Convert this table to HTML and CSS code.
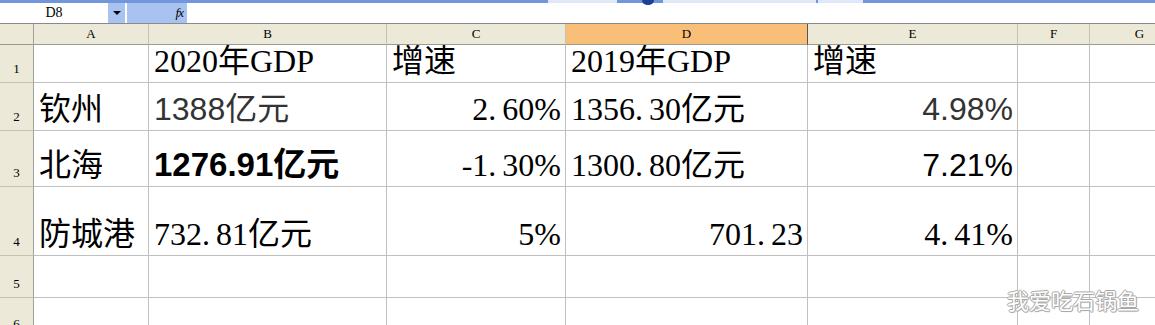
FILE: index.html
```html
<!DOCTYPE html>
<html lang="zh">
<head>
<meta charset="utf-8">
<title>Sheet</title>
<link rel="stylesheet" href="styles.css">
</head>
<body>
<div class="strip">
  <div class="seg seg1"></div>
  <div class="seg knob"></div>
  <div class="seg seg2"></div>
  <div class="seg seg3"></div>
</div>
<div class="fbar">
  <div class="namebox">D8</div>
  <div class="dd"><span class="tri"></span></div>
  <div class="fxbox"><span class="fx">fx</span></div>
  <div class="finput"></div>
</div>
<div class="sheet">
  <div class="h corner"></div>
  <div class="h col">A</div>
  <div class="h col">B</div>
  <div class="h col">C</div>
  <div class="h col sel">D</div>
  <div class="h col">E</div>
  <div class="h col">F</div>
  <div class="h col">G</div>

  <div class="h row">1</div>
  <div class="c"></div>
  <div class="c">2020年GDP</div>
  <div class="c">增速</div>
  <div class="c">2019年GDP</div>
  <div class="c">增速</div>
  <div class="c"></div>
  <div class="c"></div>

  <div class="h row">2</div>
  <div class="c">钦州</div>
  <div class="c sans grey">1388亿元</div>
  <div class="c r">2.<span class="dot"></span>60%</div>
  <div class="c">1356.<span class="dot"></span>30亿元</div>
  <div class="c r sans grey">4.98%</div>
  <div class="c"></div>
  <div class="c"></div>

  <div class="h row">3</div>
  <div class="c">北海</div>
  <div class="c sans bold">1276.91亿元</div>
  <div class="c r">-1.<span class="dot"></span>30%</div>
  <div class="c">1300.<span class="dot"></span>80亿元</div>
  <div class="c r sans">7.21%</div>
  <div class="c"></div>
  <div class="c"></div>

  <div class="h row">4</div>
  <div class="c">防城港</div>
  <div class="c">732.<span class="dot"></span>81亿元</div>
  <div class="c r">5%</div>
  <div class="c r">701.<span class="dot"></span>23</div>
  <div class="c r">4.<span class="dot"></span>41%</div>
  <div class="c"></div>
  <div class="c"></div>

  <div class="h row">5</div>
  <div class="c"></div>
  <div class="c"></div>
  <div class="c"></div>
  <div class="c"></div>
  <div class="c"></div>
  <div class="c"></div>
  <div class="c"></div>

  <div class="h row">6</div>
  <div class="c"></div>
  <div class="c"></div>
  <div class="c"></div>
  <div class="c"></div>
  <div class="c"></div>
  <div class="c"></div>
  <div class="c"></div>
</div>
<div class="watermark">我爱吃石锅鱼</div>
</body>
</html>
```

FILE: styles.css
```css
html, body {
  margin: 0;
  padding: 0;
}
body {
  width: 1155px;
  height: 325px;
  overflow: hidden;
  position: relative;
  background: #ffffff;
  font-family: "Liberation Serif", "Noto Sans CJK SC", serif;
  color: #000;
}

/* top blue strip */
.strip {
  height: 3px;
  background: #7196dc;
  display: flex;
}
.seg { height: 3px; }
.seg1 { margin-left: 548px; width: 69px; background: #dfe8f8; }
.knob { margin-left: 25px; width: 12px; height: 5px; background: #1d3f94; border-radius: 0 0 5px 5px; position: relative; z-index: 2; }
.seg2 { margin-left: 9px; width: 153px; background: #dfe8f8; }
.seg3 { margin-left: 2px; width: 45px; background: #dfe8f8; }

/* formula bar */
.fbar {
  height: 20px;
  display: flex;
  background: #ffffff;
}
.namebox {
  width: 108px;
  text-align: center;
  font-size: 14px;
  line-height: 20px;
  font-family: "Liberation Serif", serif;
  box-sizing: border-box;
}
.dd {
  width: 17px;
  background: #a8c2f1;
  display: flex;
  align-items: center;
  justify-content: center;
}
.tri {
  width: 0;
  height: 0;
  border-left: 4px solid transparent;
  border-right: 4px solid transparent;
  border-top: 4px solid #000;
}
.fxbox {
  margin-left: 2px;
  width: 60px;
  background: #a8c2f1;
  display: flex;
  align-items: center;
  justify-content: flex-end;
  padding-right: 4px;
  box-sizing: border-box;
}
.fx {
  font-family: "Liberation Serif", serif;
  font-style: italic;
  font-size: 13px;
  letter-spacing: -1px;
  color: #000;
}
.finput { flex: 1; }

/* sheet grid */
.sheet {
  display: grid;
  grid-template-columns: 34px 115px 238px 179px 242px 210px 72px 100px;
  grid-template-rows: 21px 38px 48px 56px 69px 42px 40px;
  border-top: 1px solid #8a8a8a;
}
.sheet > div {
  box-sizing: border-box;
  border-right: 1px solid #c0c0c0;
  border-bottom: 1px solid #c0c0c0;
}
.h {
  background: #ece9d8;
  font-family: "Liberation Serif", serif;
  font-size: 13px;
  color: #000;
}
.col {
  display: flex;
  align-items: center;
  justify-content: center;
  border-right-color: #c5c2b2 !important;
  border-bottom-color: #9e9b8c !important;
}
.corner {
  border-bottom-color: #9e9b8c !important;
  border-right-color: #a0a0a0 !important;
}
.sel {
  background: #f9be78;
  border-right-color: #555 !important;
}
.row {
  display: flex;
  align-items: flex-end;
  justify-content: center;
  padding-bottom: 7px;
  line-height: 1;
  border-right-color: #a0a0a0 !important;
  border-bottom-color: #c5c2b2 !important;
}

.c {
  display: flex;
  align-items: flex-end;
  padding: 0 4px 5px 5px;
  font-size: 32px;
  line-height: 1;
  white-space: nowrap;
  overflow: visible;
}
.dot { display: inline-block; width: 6px; }
.r { justify-content: flex-end; }
.sans { font-family: "Liberation Sans", "Noto Sans CJK SC", sans-serif; }
.grey { color: #333; }
.bold { font-weight: bold; font-size: 33px; }

.watermark {
  position: absolute;
  left: 1007px;
  top: 288px;
  font-family: "Noto Sans CJK SC", sans-serif;
  font-size: 22px;
  line-height: 1;
  color: #ffffff;
  text-shadow: 1px 0 0 #a8a8a8, -1px 0 0 #a8a8a8, 0 1px 0 #a8a8a8, 0 -1px 0 #a8a8a8, 1px 1px 1px #c0c0c0;
}
```
